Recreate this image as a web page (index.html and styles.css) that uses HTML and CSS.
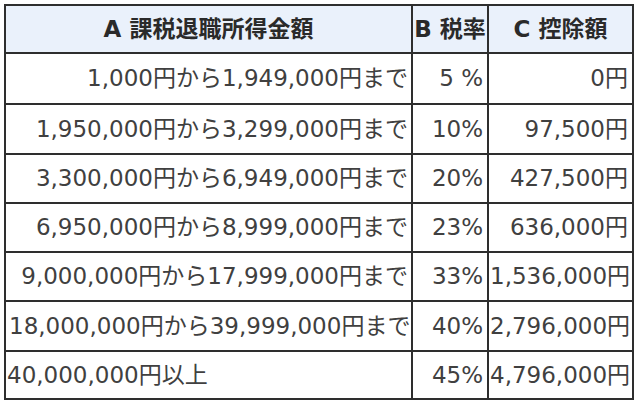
FILE: index.html
```html
<!DOCTYPE html>
<html lang="ja">
<head>
<meta charset="utf-8">
<link rel="stylesheet" href="styles.css">
</head>
<body>
<table class="tax">
  <colgroup>
    <col class="col-a">
    <col class="col-b">
    <col class="col-c">
  </colgroup>
  <thead>
    <tr>
      <th>A 課税退職所得金額</th>
      <th>B 税率</th>
      <th>C 控除額</th>
    </tr>
  </thead>
  <tbody>
    <tr><td class="r">1,000円から1,949,000円まで</td><td class="r">5 %</td><td class="r">0円</td></tr>
    <tr><td class="r">1,950,000円から3,299,000円まで</td><td class="r">10%</td><td class="r">97,500円</td></tr>
    <tr><td class="r">3,300,000円から6,949,000円まで</td><td class="r">20%</td><td class="r">427,500円</td></tr>
    <tr><td class="r">6,950,000円から8,999,000円まで</td><td class="r">23%</td><td class="r">636,000円</td></tr>
    <tr><td class="r">9,000,000円から17,999,000円まで</td><td class="r">33%</td><td class="r">1,536,000円</td></tr>
    <tr><td class="r">18,000,000円から39,999,000円まで</td><td class="r">40%</td><td class="r">2,796,000円</td></tr>
    <tr><td class="l">40,000,000円以上</td><td class="r">45%</td><td class="r">4,796,000円</td></tr>
  </tbody>
</table>
</body>
</html>
```
FILE: styles.css
```css
html, body {
  margin: 0;
  padding: 0;
  background: #ffffff;
}
body {
  padding: 4px 0 0 4px;
  font-family: "DejaVu Sans", "Noto Sans CJK JP", sans-serif;
  font-size: 23px;
  color: #404040;
}
.tax {
  table-layout: fixed;
  border-collapse: separate;
  border-spacing: 0;
  width: 630px;
  border-left: 2px solid #2e2e2e;
  border-top: 2px solid #2e2e2e;
}
.col-a { width: 407px; }
.col-b { width: 76px; }
.col-c { width: 145px; }
.tax th,
.tax td {
  box-sizing: border-box;
  border-right: 2px solid #2e2e2e;
  border-bottom: 2px solid #2e2e2e;
  padding: 0 3px;
  white-space: nowrap;
  overflow: visible;
  vertical-align: middle;
  line-height: 1;
}
.tax th {
  background: #eaf1fb;
  font-weight: bold;
  color: #2a2a2a;
  text-align: center;
  height: 48px;
  padding: 0;
}
.tax td.r { text-align: right; }
.tax td.l { text-align: left; padding-left: 1px; }
.tax tbody tr:nth-child(1) td { height: 51px; }
.tax tbody tr:nth-child(2) td { height: 50px; }
.tax tbody tr:nth-child(3) td { height: 49px; }
.tax tbody tr:nth-child(4) td { height: 49px; }
.tax tbody tr:nth-child(5) td { height: 49px; }
.tax tbody tr:nth-child(6) td { height: 50px; }
.tax tbody tr:nth-child(7) td { height: 48px; }
.tax td:nth-child(2) { padding-right: 4px; }
.tax td:nth-child(3) { padding-left: 1px; padding-right: 4px; }
```
